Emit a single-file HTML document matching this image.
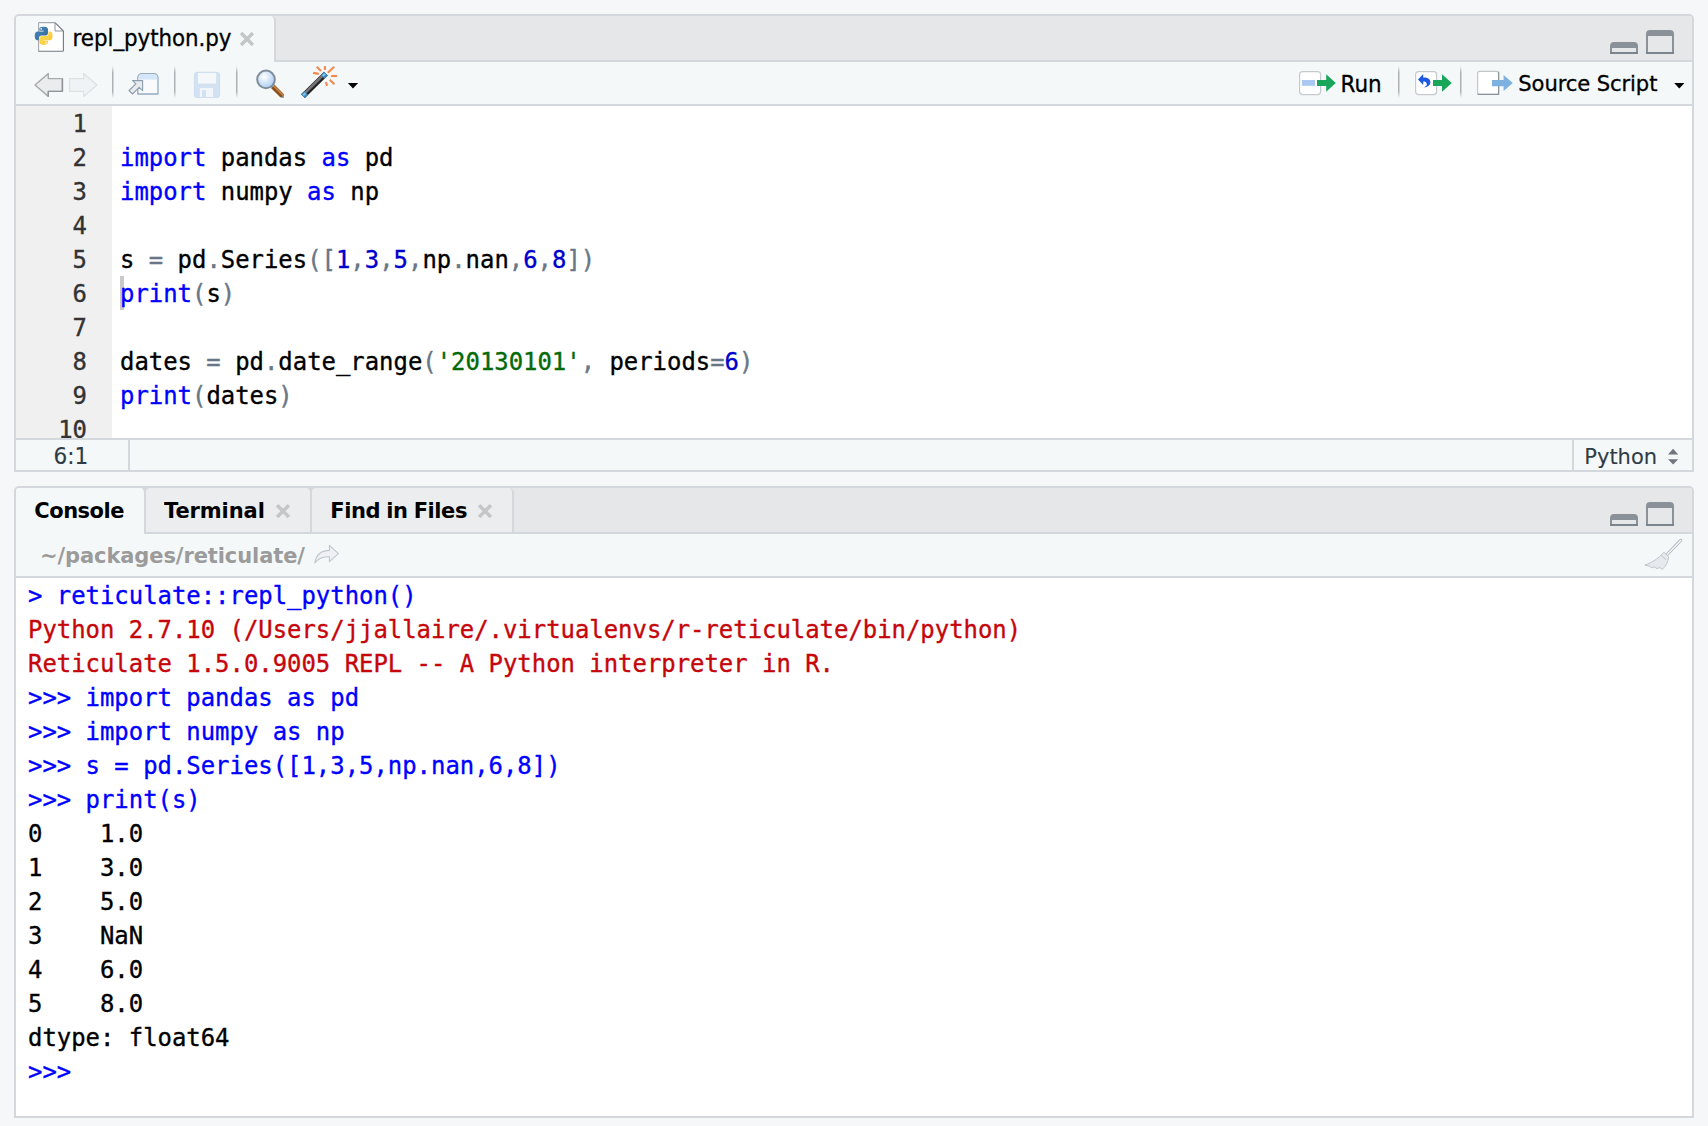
<!DOCTYPE html>
<html lang="en">
<head>
<meta charset="utf-8">
<title>RStudio - repl_python.py</title>
<style>
html,body{margin:0;padding:0;}
body{width:1708px;height:1126px;overflow:hidden;background:#f5f7f9;position:relative;font-family:"DejaVu Sans","Liberation Sans",sans-serif;color:#000;}
.a{position:absolute;box-sizing:border-box;}
.pane{position:absolute;box-sizing:border-box;border:2px solid #d4d8dc;background:#fff;border-radius:5px 5px 0 0;}
.hl{position:absolute;height:2px;background:#d4d8dc;}
.vl{position:absolute;width:2px;background:#d4d8dc;}
.sep{position:absolute;width:1px;height:32px;top:65.5px;background:linear-gradient(to bottom,rgba(170,175,180,0),rgba(170,175,180,.95) 20%,rgba(170,175,180,.95) 80%,rgba(170,175,180,0));}
.sep:after{content:"";position:absolute;left:1px;top:0;width:1px;height:32px;background:linear-gradient(to bottom,rgba(205,209,213,0),rgba(205,209,213,.9) 20%,rgba(205,209,213,.9) 80%,rgba(205,209,213,0));}
.mono{position:absolute;font-family:"DejaVu Sans Mono","Liberation Mono",monospace;font-size:23.92px;line-height:34px;white-space:pre;-webkit-text-stroke:0.35px currentColor;}
.ui{position:absolute;font-family:"DejaVu Sans","Liberation Sans",sans-serif;white-space:nowrap;line-height:26px;-webkit-text-stroke:0.3px currentColor;transform:scaleY(1.045);transform-origin:0 20.4px;}
.b{font-weight:bold;-webkit-text-stroke:0;}
.kw{color:#0000ff;}
.num{color:#0000cd;}
.str{color:#036a07;}
.op{color:#687687;}
.blue{color:#0000ff;}
.red{color:#c5060b;}
svg{position:absolute;overflow:visible;}
</style>
</head>
<body>

<!-- ============ SOURCE PANE ============ -->
<div class="pane" style="left:14px;top:14px;width:1680px;height:458px;"></div>
<div class="a" style="left:16px;top:16px;width:1676px;height:44px;background:#e6e7e9;border-radius:3px 3px 0 0;"></div>
<div class="hl" style="left:16px;top:60px;width:1676px;"></div>
<div class="a" style="left:16px;top:62px;width:1676px;height:42px;background:#f4f8f9;"></div>
<div class="a" style="left:16px;top:16px;width:260px;height:46px;background:#f4f8f9;border-right:2px solid #d4d8dc;border-radius:3px 5px 0 0;"></div>
<div class="hl" style="left:16px;top:104px;width:1676px;"></div>
<div class="ui" id="t_tab" style="left:72.6px;top:26px;font-size:21.4px;letter-spacing:-0.05px;">repl_python.py</div>

<div class="sep" style="left:112px;"></div>
<div class="sep" style="left:174px;"></div>
<div class="sep" style="left:236px;"></div>
<div class="sep" style="left:1398px;"></div>
<div class="sep" style="left:1460px;"></div>
<div class="ui" id="t_run" style="left:1340.5px;top:71.7px;font-size:21.5px;">Run</div>
<div class="ui" id="t_src" style="left:1518.3px;top:71.2px;font-size:21.1px;letter-spacing:-0.1px;">Source Script</div>

<!-- editor -->
<div class="a" style="left:16px;top:106px;width:96px;height:332px;background:#f0f0f0;"></div>
<div class="a" style="left:120px;top:276px;width:4px;height:34px;background:#c9c9c9;"></div>
<div class="a" style="left:16px;top:106px;width:1676px;height:332px;overflow:hidden;">
<div class="mono" id="gutter" style="left:0;top:0.8px;width:71px;text-align:right;color:#333;">1
2
3
4
5
6
7
8
9
10</div>
<div class="mono" id="code" style="left:104px;top:0.6px;"><span> </span>
<span class="kw">import</span> pandas <span class="kw">as</span> pd
<span class="kw">import</span> numpy <span class="kw">as</span> np
<span> </span>
s <span class="op">=</span> pd<span class="op">.</span>Series<span class="op">([</span><span class="num">1</span><span class="op">,</span><span class="num">3</span><span class="op">,</span><span class="num">5</span><span class="op">,</span>np<span class="op">.</span>nan<span class="op">,</span><span class="num">6</span><span class="op">,</span><span class="num">8</span><span class="op">])</span>
<span class="kw">print</span><span class="op">(</span>s<span class="op">)</span>
<span> </span>
dates <span class="op">=</span> pd<span class="op">.</span>date_range<span class="op">(</span><span class="str">'20130101'</span><span class="op">,</span> periods<span class="op">=</span><span class="num">6</span><span class="op">)</span>
<span class="kw">print</span><span class="op">(</span>dates<span class="op">)</span>
<span> </span></div>
</div>

<!-- status bar -->
<div class="hl" style="left:16px;top:438px;width:1676px;"></div>
<div class="a" style="left:16px;top:440px;width:1676px;height:30px;background:#f4f8f9;"></div>
<div class="vl" style="left:128px;top:440px;height:30px;"></div>
<div class="vl" style="left:1572px;top:440px;height:30px;"></div>
<div class="ui" id="t_pos" style="left:53.5px;top:444px;font-size:21.6px;color:#2f3b46;-webkit-text-stroke:0.1px currentColor;">6:1</div>
<div class="ui" id="t_lang" style="left:1584.3px;top:443.5px;font-size:21px;color:#2f3b46;-webkit-text-stroke:0.1px currentColor;">Python</div>

<!-- ============ CONSOLE PANE ============ -->
<div class="pane" style="left:14px;top:486px;width:1680px;height:632px;"></div>
<div class="a" style="left:16px;top:488px;width:1676px;height:44px;background:#e6e7e9;border-radius:3px 3px 0 0;"></div>
<div class="hl" style="left:16px;top:532px;width:1676px;"></div>
<div class="a" style="left:16px;top:534px;width:1676px;height:42px;background:#f4f8f9;"></div>
<div class="hl" style="left:16px;top:576px;width:1676px;"></div>
<div class="a" style="left:140px;top:488px;width:12px;height:6px;background:#d4d8dc;"></div>
<div class="a" style="left:306px;top:488px;width:12px;height:6px;background:#d4d8dc;"></div>
<div class="a" style="left:16px;top:488px;width:130px;height:46px;background:#f4f8f9;border-right:2px solid #d4d8dc;border-radius:3px 5px 0 0;"></div>
<div class="a" style="left:146px;top:488px;width:166px;height:44px;background:#ecedef;border-right:2px solid #d4d8dc;border-radius:4px 5px 0 0;"></div>
<div class="a" style="left:312px;top:488px;width:202px;height:44px;background:#ecedef;border-right:2px solid #d4d8dc;border-radius:4px 5px 0 0;"></div>
<div class="ui b" id="t_con" style="left:34.3px;top:497.5px;font-size:21px;letter-spacing:-0.5px;">Console</div>
<div class="ui b" id="t_term" style="left:164px;top:497.5px;letter-spacing:-0.1px;font-size:21px;">Terminal</div>
<div class="ui b" id="t_find" style="left:330.3px;top:497.5px;font-size:21px;letter-spacing:-0.42px;word-spacing:-0.8px;">Find in Files</div>
<div class="ui b" id="t_path" style="left:40px;top:543px;font-size:21px;letter-spacing:-0.1px;color:#9b9b9b;">~/packages/reticulate/</div>

<div class="a" style="left:16px;top:578px;width:1676px;height:538px;overflow:hidden;">
<div class="mono" id="console" style="left:12px;top:0.8px;"><span class="blue">&gt; reticulate::repl_python()</span>
<span class="red">Python 2.7.10 (/Users/jjallaire/.virtualenvs/r-reticulate/bin/python)</span>
<span class="red">Reticulate 1.5.0.9005 REPL -- A Python interpreter in R.</span>
<span class="blue">&gt;&gt;&gt; import pandas as pd</span>
<span class="blue">&gt;&gt;&gt; import numpy as np</span>
<span class="blue">&gt;&gt;&gt; s = pd.Series([1,3,5,np.nan,6,8])</span>
<span class="blue">&gt;&gt;&gt; print(s)</span>
0    1.0
1    3.0
2    5.0
3    NaN
4    6.0
5    8.0
dtype: float64
<span class="blue">&gt;&gt;&gt; </span></div>
</div>

<svg width="1708" height="1126" viewBox="0 0 1708 1126" style="left:0;top:0;pointer-events:none">
<defs>
<radialGradient id="lens" cx="40%" cy="35%" r="70%"><stop offset="0" stop-color="#ffffff"/><stop offset="0.55" stop-color="#cfe2f9"/><stop offset="1" stop-color="#a8caf5"/></radialGradient>
<linearGradient id="pb" x1="0" y1="0" x2="1" y2="1"><stop offset="0" stop-color="#4a8cc4"/><stop offset="1" stop-color="#2f6491"/></linearGradient>
<linearGradient id="pyl" x1="0" y1="0" x2="1" y2="1"><stop offset="0" stop-color="#ffe05a"/><stop offset="1" stop-color="#f7c331"/></linearGradient>
</defs>

<!-- python file icon -->
<path d="M38.6 22.6H55L63.4 31V51.3H38.6z" fill="#fff"/>
<path d="M38.6 51.3V23.2a.6.6 0 0 1 .6-.6H55" fill="none" stroke="#a3a8ae" stroke-width="1.1"/>
<path d="M55 22.6L63.4 31V50.6a.7.7 0 0 1-.7.7H39.2a.6.6 0 0 1-.6-.6" fill="none" stroke="#737981" stroke-width="1.1"/>
<path d="M55 22.8V31H63.2" fill="none" stroke="#8e949b" stroke-width="1"/>
<g transform="translate(34.7,26.8) scale(0.161)"><path d="M54.92 0c-4.58.02-8.96.41-12.81 1.09C30.76 3.1 28.7 7.29 28.7 15.02v10.22h26.81v3.41H18.64c-7.79 0-14.62 4.68-16.75 13.59-2.46 10.21-2.57 16.59 0 27.25 1.91 7.94 6.46 13.59 14.25 13.59h9.22V70.83c0-8.85 7.66-16.66 16.75-16.66h26.78c7.45 0 13.41-6.14 13.41-13.62V15.02c0-7.27-6.13-12.72-13.41-13.94C64.28.31 59.5-.02 54.92 0zM40.42 8.22c2.77 0 5.03 2.3 5.03 5.12 0 2.82-2.26 5.1-5.03 5.1-2.78 0-5.03-2.28-5.03-5.1 0-2.83 2.25-5.12 5.03-5.12z" fill="url(#pb)"/><path d="M85.64 28.66v11.91c0 9.23-7.83 17-16.75 17H42.11c-7.34 0-13.41 6.28-13.41 13.62v25.53c0 7.27 6.32 11.54 13.41 13.62 8.49 2.5 16.63 2.95 26.78 0 6.75-1.95 13.41-5.89 13.41-13.62V86.5H55.52v-3.41h40.19c7.79 0 10.7-5.44 13.41-13.59 2.8-8.39 2.68-16.47 0-27.25-1.93-7.76-5.6-13.59-13.41-13.59H85.64zM70.58 93.31c2.78 0 5.03 2.28 5.03 5.1 0 2.83-2.25 5.12-5.03 5.12-2.77 0-5.03-2.3-5.03-5.12 0-2.82 2.26-5.1 5.03-5.1z" fill="url(#pyl)"/></g>
<path d="M241.1 33.1L252.9 44.9M252.9 33.1L241.1 44.9" stroke="#c4c6c7" stroke-width="3.5" fill="none"/>

<!-- back / forward -->
<path d="M35 85L48.3 73.6V78.6H62.4V91.4H48.3V96.4z" fill="#ebecee" stroke="#a7abb0" stroke-width="1.4" stroke-linejoin="round"/>
<path d="M48.3 96.4V91.4H62.4V78.6" fill="none" stroke="#8e9398" stroke-width="1.4" stroke-linejoin="round"/>
<path d="M97 85L83.7 73.6V78.6H69.6V91.4H83.7V96.4z" fill="#f0f3f5" stroke="#dfe2e5" stroke-width="1.3" stroke-linejoin="round"/>

<!-- popout -->
<path d="M137.8 94V77.7a4 4 0 0 1 4-4h12.2a4 4 0 0 1 4 4V94z" fill="#f8fafc" stroke="#94abc0" stroke-width="1.3" stroke-linejoin="round"/>
<path d="M138.5 79.4V77.8a3.4 3.4 0 0 1 3.4-3.4h12a3.4 3.4 0 0 1 3.4 3.4V79.4z" fill="#d3e6fa"/>
<path d="M132.5 80.6H142.6V90.7L139.2 87.3L132.5 94L129 90.5L135.9 83.9z" fill="#e8eaee" stroke="#8d9eae" stroke-width="1.1" stroke-linejoin="round"/>

<!-- save (disabled) -->
<rect x="194.4" y="72.3" width="25.2" height="25.2" rx="2.6" fill="#d2e2f2" stroke="#c8dbee" stroke-width="0.9"/>
<rect x="198" y="73" width="18.1" height="10.6" fill="#f4f8fb"/>
<rect x="199.9" y="88" width="13.1" height="9.1" fill="#f1f6fb"/>
<rect x="202" y="90" width="4" height="7.1" fill="#d2e2f2"/>

<!-- find -->
<clipPath id="hc"><rect x="268" y="82" width="16" height="15.6"/></clipPath>
<g clip-path="url(#hc)">
<path d="M272.4 86L285 98.6" stroke="#8c5120" stroke-width="4.8"/>
<path d="M273.2 85.4L285.6 97.8" stroke="#c58445" stroke-width="1.6"/>
<path d="M271 87.6L274.2 84.4" stroke="#7cc4ee" stroke-width="1.3"/>
</g>
<rect x="282.6" y="95.8" width="1.4" height="1.8" fill="#4fb6f0"/>
<circle cx="266" cy="79.4" r="8.8" fill="url(#lens)" stroke="#7f8d9b" stroke-width="2"/>

<!-- wand -->
<path d="M303.00 96.20L325.90 73.60" stroke="#222" stroke-width="5.4"/>
<path d="M302.37 95.56L325.27 72.96" stroke="#757575" stroke-width="2.6"/>
<path d="M303.00 96.20L306.27 92.97" stroke="#3d86b9" stroke-width="5.4"/>
<path d="M322.63 76.83L325.90 73.60" stroke="#3d86b9" stroke-width="5.4"/>
<path d="M303.08 95.42L305.50 93.03" stroke="#7fc0e6" stroke-width="2.2"/>
<path d="M322.70 76.05L325.12 73.67" stroke="#7fc0e6" stroke-width="2.2"/>
<g stroke="#f5884f" stroke-width="2.1" fill="none">
<path d="M316.7 66.8L321 70.9"/><path d="M324.9 66.1V69.9"/><path d="M327.8 72.7L334.2 66.8"/>
<path d="M313.1 72.9L318.8 73.9"/><path d="M331.1 76H337"/><path d="M329.7 79.7L334.4 84.2"/><path d="M325.8 82.1L327.2 85.8"/>
</g>
<path d="M347.9 83H358.1L353 88.4z" fill="#000"/>

<!-- run -->
<rect x="1299.6" y="71.6" width="21" height="23" rx="3" fill="#fff" stroke="#c6cacf" stroke-width="1.2"/>
<rect x="1302" y="80" width="13" height="5.8" fill="#aac8f1"/>
<path d="M1317 80H1326.2V74.2L1335.8 83L1326.2 91.8V86H1317z" fill="#1aa65a"/>
<!-- rerun -->
<rect x="1415.6" y="71.6" width="21" height="23" rx="3" fill="#fff" stroke="#c6cacf" stroke-width="1.2"/>
<path d="M1418 79.5L1423.2 74V77.6C1427.6 77.4 1430.6 79.4 1430.4 82.6C1430.2 85.6 1427.4 87.4 1423.8 87.6C1426.4 86.2 1427.4 84.6 1426.6 83.2C1425.8 82 1424.6 81.6 1423.2 81.6V85z" fill="#1d59e2"/>
<path d="M1433 80H1442V74.2L1451.8 83L1442 91.8V86H1433z" fill="#1aa65a"/>
<!-- source -->
<rect x="1477.6" y="71.4" width="21" height="23" rx="2" fill="#fff" stroke="#c3c7cc" stroke-width="1.2"/>
<path d="M1477.6 94.4H1498.6V71.8" fill="none" stroke="#8d939a" stroke-width="1.2"/>
<path d="M1492 80H1503.6V75L1512.8 83L1503.6 91V86.2H1492z" fill="#7eb1e0"/>
<path d="M1674.2 83H1684.4L1679.3 88.4z" fill="#000"/>


<path d="M1610 54V46a4 4 0 0 1 4-4h20a4 4 0 0 1 4 4V54zM1612 48v4h24v-4z" fill="#8a9199" fill-rule="evenodd"/>
<path d="M1646 54V34a4 4 0 0 1 4-4h20a4 4 0 0 1 4 4V54zM1648 36v16h24v-16z" fill="#8a9199" fill-rule="evenodd"/>
<rect x="1610" y="52" width="28" height="2" fill="#7c858c"/><rect x="1646" y="52" width="28" height="2" fill="#7c858c"/>

<path d="M1610 526V518a4 4 0 0 1 4-4h20a4 4 0 0 1 4 4V526zM1612 520v4h24v-4z" fill="#8a9199" fill-rule="evenodd"/>
<path d="M1646 526V506a4 4 0 0 1 4-4h20a4 4 0 0 1 4 4V526zM1648 508v16h24v-16z" fill="#8a9199" fill-rule="evenodd"/>
<rect x="1610" y="524" width="28" height="2" fill="#7c858c"/><rect x="1646" y="524" width="28" height="2" fill="#7c858c"/>

<!-- status bar python arrows -->
<path d="M1668 454.4L1673.1 448.8L1678.2 454.4z" fill="#6f767d"/><path d="M1668 459.2H1678.2L1673.1 464.4z" fill="#6f767d"/>

<path d="M277.1 505.20000000000005L288.9 517.0M288.9 505.20000000000005L277.1 517.0" stroke="#c4c6c7" stroke-width="3.5" fill="none"/>
<path d="M479.1 505.20000000000005L490.9 517.0M490.9 505.20000000000005L479.1 517.0" stroke="#c4c6c7" stroke-width="3.5" fill="none"/>

<!-- path arrow -->
<path d="M314.8 563C316 554.5 321.5 550.6 329.4 550.4V545.4L338.4 553.6L329.4 561.6V556.8C323.6 556.4 318.6 558 314.8 563z" fill="#eef0f4" stroke="#c2c6cd" stroke-width="1.1" stroke-linejoin="round"/>

<!-- broom -->
<path d="M1680.6 540.4L1666.6 555" stroke="#b4b9c1" stroke-width="3.2" stroke-linecap="round"/>
<path d="M1680.6 540.4L1666.6 555" stroke="#f2f4f6" stroke-width="1.4" stroke-linecap="round"/>
<path d="M1663.8 552.2L1668.6 556.8C1668 562 1666 566.4 1662.4 569.2L1659.6 567.6L1657 568.6L1654.4 567L1651.6 567.6L1649 566L1644.8 565.2C1652 562.6 1659 558.4 1663.8 552.2z" fill="#e6e9ed" stroke="#c0c5cc" stroke-width="1"/>
<path d="M1661.4 555.2L1665.8 559.6" stroke="#b9bec6" stroke-width="1"/>
</svg>


</body>
</html>
